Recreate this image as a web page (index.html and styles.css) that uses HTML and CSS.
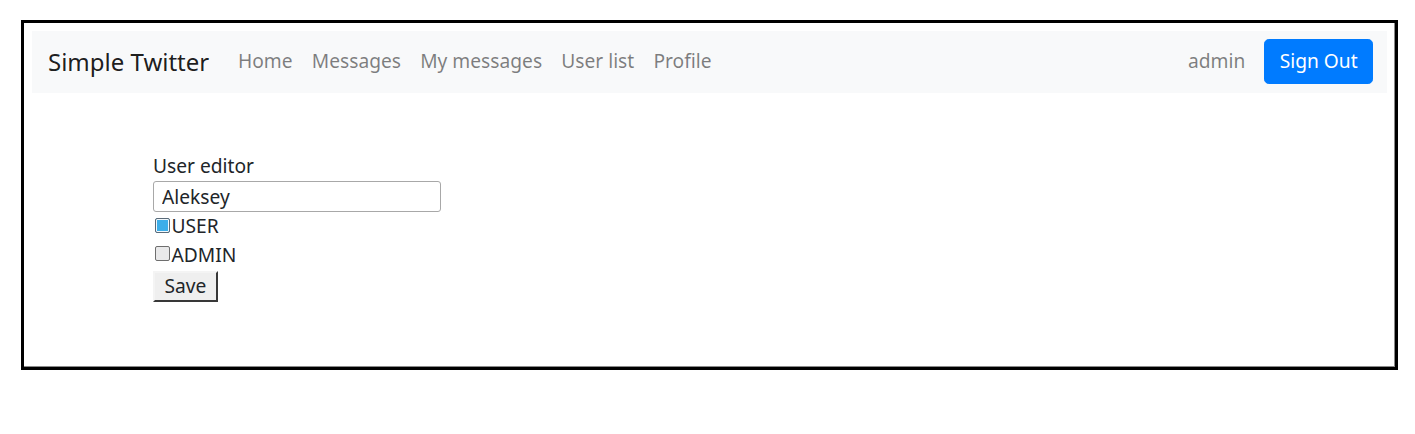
FILE: index.html
```html
<!DOCTYPE html>
<html lang="en">
<head>
<meta charset="utf-8">
<title>Simple Twitter</title>
<link rel="stylesheet" href="styles.css">
</head>
<body>
<div class="frame">
  <nav class="navbar">
    <a class="brand" href="#">Simple Twitter</a>
    <ul class="nav">
      <li><a class="nav-link" href="#">Home</a></li>
      <li><a class="nav-link" href="#">Messages</a></li>
      <li><a class="nav-link" href="#">My messages</a></li>
      <li><a class="nav-link" href="#">User list</a></li>
      <li><a class="nav-link" href="#">Profile</a></li>
    </ul>
    <div class="nav-right">
      <span class="user-name">admin</span>
      <button class="btn-primary" type="button">Sign Out</button>
    </div>
  </nav>
  <main class="content">
    <form class="editor">
      <div class="editor-title">User editor</div>
      <input class="text-input" type="text" value="Aleksey">
      <label class="check-row"><input class="check" type="checkbox" checked>USER</label>
      <label class="check-row"><input class="check" type="checkbox">ADMIN</label>
      <button class="btn-save" type="button">Save</button>
    </form>
  </main>
</div>
</body>
</html>
```

FILE: styles.css
```css
html, body {
  margin: 0;
  padding: 0;
  background: #fff;
}

body {
  font-family: "Noto Sans", "Open Sans", sans-serif;
  font-size: 19.2px;
  line-height: 28.8px;
  color: #212529;
  padding: 20px 17px 0 21px;
}

.frame {
  border: 3px solid #000;
  box-shadow: inset -1px -1px 0 #8a8a8a;
}

.navbar {
  margin: 8px;
  height: 62px;
  box-sizing: border-box;
  padding: 0 14px 1px 16px;
  background: #f8f9fa;
  display: flex;
  align-items: center;
}

.brand {
  font-size: 24px;
  line-height: 36px;
  color: rgba(0, 0, 0, 0.9);
  text-decoration: none;
  margin-right: 19.2px;
}

.nav {
  list-style: none;
  margin: 0;
  padding: 0;
  display: flex;
  flex: 1;
}

.nav-link {
  display: block;
  padding: 0 9.6px;
  color: rgba(0, 0, 0, 0.5);
  text-decoration: none;
}

.nav-right {
  display: flex;
  align-items: center;
}

.user-name {
  color: rgba(0, 0, 0, 0.5);
  margin-right: 19px;
}

.btn-primary {
  font-family: inherit;
  font-size: 19.2px;
  line-height: 28.8px;
  color: #fff;
  background: #007bff;
  border: 1.2px solid #007bff;
  border-radius: 4.8px;
  padding: 7.2px 14.4px;
  cursor: pointer;
}

.content {
  padding: 51px 0 65px 129px;
}

.editor {
  display: flex;
  flex-direction: column;
  align-items: flex-start;
}

.editor-title {
  line-height: 28.8px;
}

.text-input {
  box-sizing: border-box;
  width: 288px;
  height: 31px;
  font-family: inherit;
  font-size: 19.2px;
  color: #212529;
  padding: 0 8px;
  border: 1px solid #a8a8a8;
  border-radius: 3px;
  background: #fff;
  outline: none;
}

.check-row {
  display: flex;
  align-items: center;
  line-height: 28.8px;
}

.check {
  appearance: none;
  -webkit-appearance: none;
  box-sizing: border-box;
  width: 15px;
  height: 15px;
  margin: 0 2px 0 1.5px;
  border: 1px solid #6e6e6e;
  border-radius: 2px;
  background: #e9e9ea;
  position: relative;
  top: -1px;
}

.check:checked {
  background: #3daee9;
  box-shadow: inset 0 0 0 1px #f2f8fc;
  border-color: #5a6a78;
}

.btn-save {
  box-sizing: border-box;
  margin-top: 1.5px;
  height: 31px;
  font-family: inherit;
  font-size: 19.2px;
  line-height: 26px;
  color: #212529;
  padding: 0 9.5px;
  background: #efefef;
  border: 2px outset #767676;
  border-top-color: #f4f4f4;
  border-left-color: #f4f4f4;
  border-right-color: #8c8c8c;
  border-bottom-color: #8c8c8c;
  border-radius: 0;
}
```
